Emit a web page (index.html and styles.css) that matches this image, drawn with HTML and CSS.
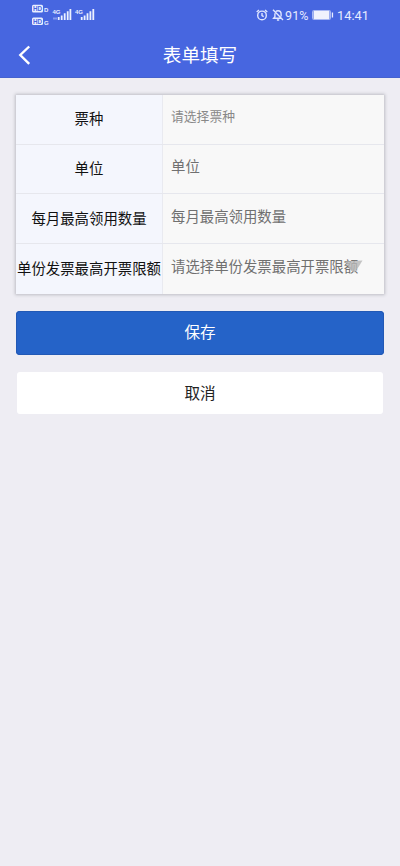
FILE: index.html
```html
<!DOCTYPE html>
<html lang="zh-CN">
<head>
<meta charset="utf-8">
<title>表单填写</title>
<link rel="stylesheet" href="styles.css">
</head>
<body>
<header class="top">
  <div class="status">
    <svg class="signals" width="66" height="24" viewBox="0 0 66 24">
      <g class="badge">
        <rect x="0" y="1.8" width="11" height="7.6" rx="1.5"/>
        <rect x="0" y="14.5" width="11" height="7.6" rx="1.5"/>
      </g>
      <g class="badge-text">
        <text x="1" y="8">HD</text>
        <text x="1" y="20.7">HD</text>
      </g>
      <g class="tiny">
        <text x="12" y="9.4">D</text>
        <text x="12" y="22.2">G</text>
        <text x="20.5" y="10.5">4G</text>
        <text x="43" y="10.5">4G</text>
      </g>
      <path class="bars" d="M26.7 17v-3M29.7 17v-4.5M32.7 17v-6.7M35.7 17V8.2M38.4 17V6M49.7 17v-3M52.6 17v-4.5M55.5 17v-6.7M58.4 17V8.2M61.3 17V6"/>
      <path class="faint" d="M21 15.5h4"/>
    </svg>
    <div class="status-right">
      <svg width="12" height="12" viewBox="0 0 12 12" class="line-icon">
        <circle cx="6" cy="6.4" r="4.3"/>
        <path d="M6 4v2.7l1.7 1M.7 3 3 1M11.3 3 9 1"/>
      </svg>
      <svg width="12" height="12" viewBox="0 0 12 12" class="line-icon bell">
        <path d="M1 .8 11 11M3.9 2.4C4.4 1.9 5 1.7 6 1.7c2 0 3.1 1.4 3.1 3.3v2.6M2.9 4.2v3.6L1.7 9.2h7.2M4.9 11h2.3"/>
      </svg>
      <span class="percent">91%</span>
      <svg width="22" height="10" viewBox="0 0 22 10" class="battery">
        <rect x=".5" y=".5" width="18" height="9" rx="1" fill="none" stroke="#a9b8f3"/>
        <rect x="1.5" y="1" width="16" height="8" fill="#f0f2fd"/>
        <rect x="19.8" y="2.5" width="1.3" height="5" fill="#e8edff"/>
      </svg>
      <span class="clock">14:41</span>
    </div>
  </div>
  <div class="nav">
    <svg class="back" width="14" height="22" viewBox="0 0 14 22"><path d="M11.2 2.5 2.3 11l8.9 8.8"/></svg>
    <h1>表单填写</h1>
  </div>
</header>
<main>
  <div class="card">
    <div class="row"><div class="label">票种</div><div class="field select-small">请选择票种</div></div>
    <div class="row"><div class="label">单位</div><div class="field">单位</div></div>
    <div class="row"><div class="label">每月最高领用数量</div><div class="field">每月最高领用数量</div></div>
    <div class="row"><div class="label">单份发票最高开票限额</div><div class="field">请选择单份发票最高开票限额<svg class="caret" width="18" height="13" viewBox="0 0 18 13"><path d="M0 1.2 17.5.5 13.5 7 9.5 12.5 5 9.5Z"/></svg></div></div>
  </div>
  <div class="button save">保存</div>
  <div class="button cancel">取消</div>
</main>
</body>
</html>
```

FILE: styles.css
```css
* { box-sizing: border-box; }
body {
  margin: 0;
  min-height: 866px;
  background: #eeedf3;
  font-family: "Noto Sans CJK SC", sans-serif;
}
.top {
  height: 78px;
  background: #4766e0;
  border-bottom: 1px solid #4562cf;
  color: #fff;
}
.status {
  height: 32px;
  padding: 3px 31px 0 32px;
  display: flex;
  justify-content: space-between;
}
.badge { fill: #e9eeff; }
.badge-text { font: bold 6.3px "Liberation Sans", sans-serif; fill: #4766e0; }
.tiny { font: bold 6px "Liberation Sans", sans-serif; fill: #e9eeff; }
.bars { stroke: #edf1ff; stroke-width: 1.8; fill: none; }
.faint { stroke: #8398ee; stroke-width: 2; }
.status-right {
  height: 24px;
  display: flex;
  align-items: center;
  font: 13px/24px Roboto, sans-serif;
  color: #e6ebff;
}
.line-icon { fill: none; stroke: #dfe6ff; stroke-width: 1.4; }
.bell { margin-left: 4px; }
.percent { margin-left: 1px; width: 26px; padding-top: 1px; font-size: 12.5px; letter-spacing: .1px; }
.battery { margin-left: 1px; }
.clock { margin-left: 3px; width: 32px; padding-top: 1px; font-size: 12.8px; white-space: nowrap; }
.nav {
  height: 45px;
  display: grid;
  grid-template-columns: 60px 1fr 60px;
  align-items: center;
}
.back { margin-left: 18px; fill: none; stroke: #fff; stroke-width: 2.4; }
h1 {
  margin: 0;
  padding-bottom: 1px;
  font-size: 18.6px;
  line-height: 28px;
  font-weight: 400;
  text-align: center;
}
main { padding: 17px 16px 0; }
.card {
  height: 199px;
  display: grid;
  grid-template-rows: 49px 49px 50px 51px;
  background: #f8f8f8;
  box-shadow: 0 0 3px 1px #bdbdc4;
}
.row {
  display: grid;
  grid-template-columns: 147px 1fr;
}
.row + .row { border-top: 1px solid #e6e7ed; }
.label {
  background: #f4f6fd;
  border-right: 1px solid #e9eaf0;
  color: #111;
  font-size: 14.4px;
  line-height: 47px;
  text-align: center;
  white-space: nowrap;
}
.field {
  position: relative;
  padding-left: 8px;
  color: #707070;
  font-size: 14.4px;
  line-height: 43px;
  white-space: nowrap;
}
.row:first-child .label { line-height: 46px; }
.row:nth-child(2) .label { line-height: 45px; }
.row:nth-child(2) .field { line-height: 41px; }
.select-small { line-height: 42px; font-size: 12.8px; color: #888; }
.caret { position: absolute; left: 182px; top: 16px; fill: #b8b8b8; opacity: .8; }
.button {
  height: 44px;
  font-size: 15.6px;
  line-height: 41px;
  text-align: center;
}
.save {
  margin-top: 17px;
  border-radius: 4px;
  background: #2563c8;
  box-shadow: inset 0 0 0 1px #2259b5;
  color: #fff;
}
.cancel {
  margin: 17px 1px 0;
  height: 42px;
  border-radius: 3px;
  background: #fff;
  color: #222;
}
```
